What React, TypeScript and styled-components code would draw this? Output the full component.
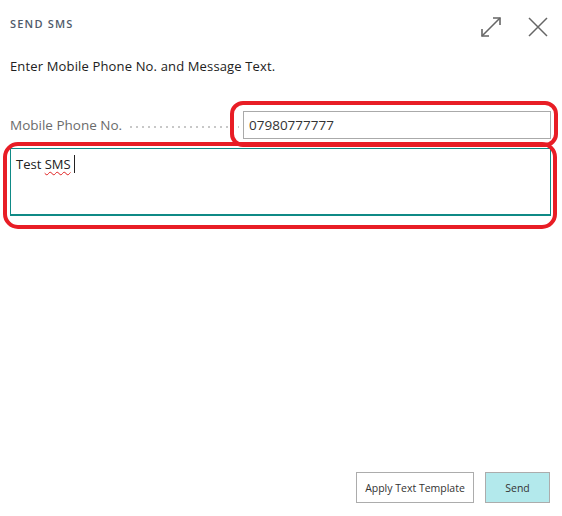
import React from "react";
import styled, { createGlobalStyle } from "styled-components";

const Global = createGlobalStyle`
  html, body { margin: 0; padding: 0; background: #fff; }
  body { font-family: "Open Sans", "Noto Sans", Arial, sans-serif; }
`;

const Dialog = styled.div`
  width: 562px;
  height: 516px;
  box-sizing: border-box;
  padding: 0 11px 13px 10px;
  display: flex;
  flex-direction: column;
  background: #fff;
`;

const Header = styled.div`
  height: 50px;
  display: flex;
  align-items: center;
  justify-content: space-between;
`;

const Title = styled.div`
  font-size: 11px;
  font-weight: 600;
  letter-spacing: 1.2px;
  color: #505a6a;
  margin-top: -4px;
`;

const IconBar = styled.div`
  display: flex;
  align-items: center;
  gap: 25px;
  margin-top: 3px;
  margin-right: 2px;
`;

const IconBtn = styled.button`
  width: 22px;
  height: 22px;
  padding: 0;
  border: none;
  background: none;
  display: flex;
  align-items: center;
  justify-content: center;
  color: #666;
`;

const Instruction = styled.div`
  font-size: 13px;
  letter-spacing: 0.15px;
  color: #212121;
  line-height: 18px;
  margin-top: 7px;
`;

const FieldRow = styled.div`
  display: flex;
  align-items: center;
  margin-top: 36px;
  height: 28px;
`;

const Label = styled.div`
  font-size: 13.5px;
  color: #6b6b6b;
  white-space: nowrap;
  flex-shrink: 0;
`;

const Leader = styled.div`
  flex: 1;
  margin: 4px 4px 0 6px;
  background-image: radial-gradient(circle, #c8c8c8 0.8px, transparent 1px);
  background-size: 6px 2px;
  background-repeat: repeat-x;
  height: 2px;
`;

const Annotated = styled.div<{ $l: number; $t: number; $r: number; $b: number; $rad: number }>`
  position: relative;
  &::after {
    content: "";
    position: absolute;
    left: ${(p) => -p.$l}px;
    top: ${(p) => -p.$t}px;
    right: ${(p) => -p.$r}px;
    bottom: ${(p) => -p.$b}px;
    border: 4px solid #e81d25;
    border-radius: ${(p) => p.$rad}px;
    pointer-events: none;
  }
`;

const InputWrap = styled(Annotated)`
  width: 308px;
  flex-shrink: 0;
`;

const Input = styled.div`
  box-sizing: border-box;
  height: 28px;
  border: 1px solid #aaa;
  padding: 0 5px;
  display: flex;
  align-items: center;
  font-size: 13.5px;
  color: #333;
`;

const TextAreaWrap = styled(Annotated)`
  margin-top: 9px;
  width: 541px;
`;

const TextArea = styled.div`
  box-sizing: border-box;
  height: 68px;
  border: 1px solid #0f8a86;
  border-bottom: 2px solid #0f8a86;
  padding: 6px 5px;
  font-size: 13px;
  color: #212121;
  line-height: 18px;
  display: flex;
  align-items: flex-start;
`;

const Misspelled = styled.span`
  text-decoration: underline wavy #e02020;
  text-decoration-thickness: 1px;
  text-underline-offset: 2px;
`;

const Caret = styled.span`
  display: inline-block;
  width: 1px;
  height: 18px;
  background: #222;
  margin-left: 3px;
`;

const Spacer = styled.div`
  flex: 1;
`;

const Footer = styled.div`
  display: flex;
  justify-content: flex-end;
  gap: 11px;
  padding-right: 1px;
`;

const Button = styled.button<{ $primary?: boolean }>`
  height: 31px;
  box-sizing: border-box;
  padding: 0 ${(p) => (p.$primary ? "19px" : "8px")};
  min-width: ${(p) => (p.$primary ? "65px" : "118px")};
  border: 1px solid #acacac;
  background: ${(p) => (p.$primary ? "#b3e9ec" : "#fff")};
  font-family: inherit;
  font-size: 10.5px;
  color: #333;
`;

const ExpandIcon = () => (
  <svg width="22" height="22" viewBox="0 0 22 22" fill="none" stroke="#666" strokeWidth="1.6">
    <path d="M2 20 L20 2" />
    <path d="M13 2 H20 V9" />
    <path d="M2 13 V20 H9" />
  </svg>
);

const CloseIcon = () => (
  <svg width="22" height="22" viewBox="0 0 22 22" fill="none" stroke="#666" strokeWidth="1.5">
    <path d="M2 2 L20 20 M20 2 L2 20" />
  </svg>
);

export default function App() {
  return (
    <>
      <Global />
      <Dialog>
        <Header>
          <Title>SEND SMS</Title>
          <IconBar>
            <IconBtn aria-label="Expand">
              <ExpandIcon />
            </IconBtn>
            <IconBtn aria-label="Close">
              <CloseIcon />
            </IconBtn>
          </IconBar>
        </Header>
        <Instruction>Enter Mobile Phone No. and Message Text.</Instruction>
        <FieldRow>
          <Label>Mobile Phone No.</Label>
          <Leader />
          <InputWrap $l={13} $t={10} $r={7} $b={8} $rad={13}>
            <Input>07980777777</Input>
          </InputWrap>
        </FieldRow>
        <TextAreaWrap $l={7} $t={6} $r={6} $b={13} $rad={15}>
          <TextArea>
            Test&nbsp;<Misspelled>SMS</Misspelled>
            <Caret />
          </TextArea>
        </TextAreaWrap>
        <Spacer />
        <Footer>
          <Button>Apply Text Template</Button>
          <Button $primary>Send</Button>
        </Footer>
      </Dialog>
    </>
  );
}
